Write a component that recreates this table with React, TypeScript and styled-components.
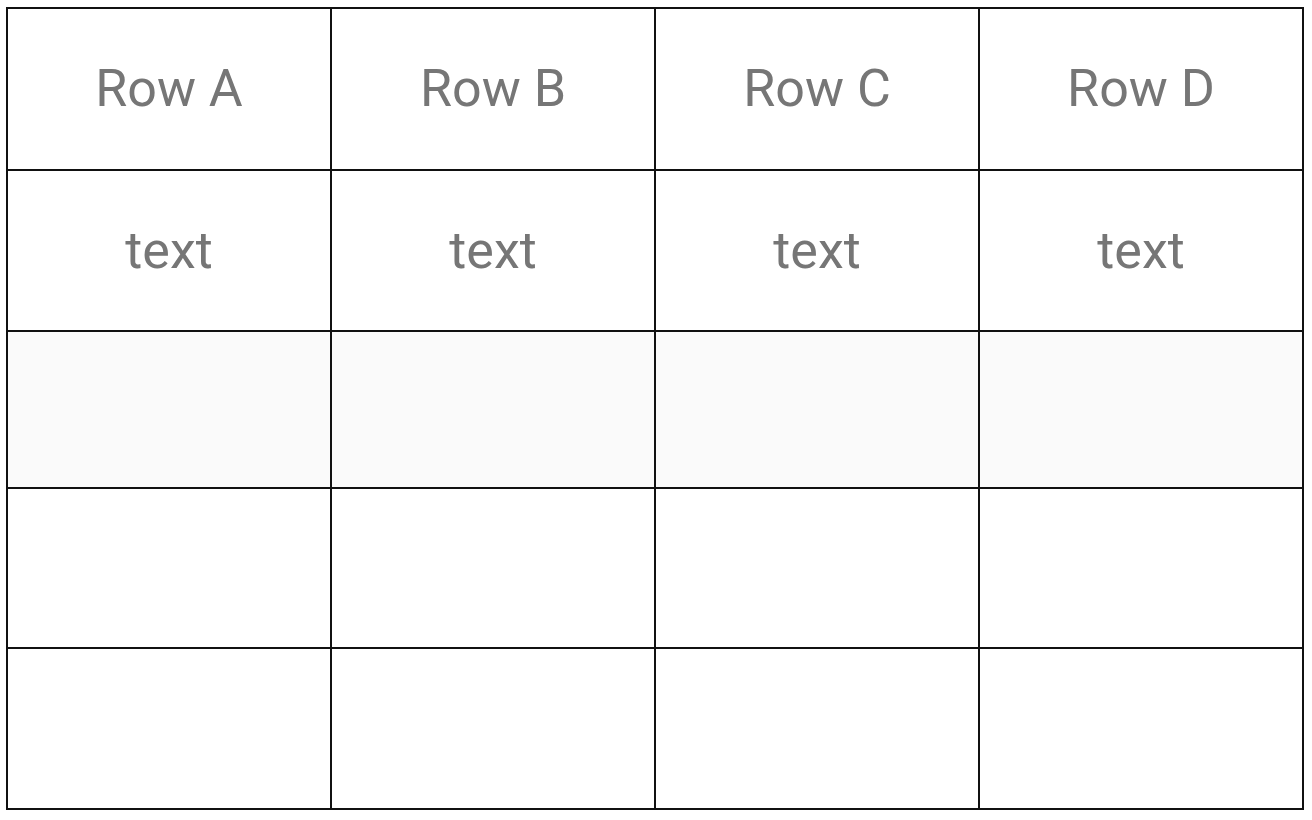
import React from "react";
import styled, { createGlobalStyle } from "styled-components";

const Global = createGlobalStyle`
  html, body { margin: 0; padding: 0; background: #ffffff; }
  body { font-family: Roboto, "Liberation Sans", sans-serif; }
`;

const Page = styled.div`
  padding: 7px 0 0 6px;
`;

const Table = styled.div`
  width: 1298px;
  display: grid;
  grid-template-columns: repeat(4, 1fr);
  grid-template-rows: 160px 159px 155px 158px 159px;
  gap: 2px;
  background: #111111;
  border: 2px solid #111111;
  box-sizing: border-box;
`;

const Cell = styled.div<{ $shade?: boolean }>`
  background: ${(p) => (p.$shade ? "#fafafa" : "#ffffff")};
  display: flex;
  align-items: center;
  justify-content: center;
  color: #767676;
  font-size: 52px;
  font-weight: 400;
  line-height: 1;
`;

const heads = ["Row A", "Row B", "Row C", "Row D"];

export default function App() {
  return (
    <Page>
      <Global />
      <Table>
        {heads.map((h) => (
          <Cell key={h}>{h}</Cell>
        ))}
        {heads.map((h) => (
          <Cell key={h + "t"}>text</Cell>
        ))}
        {heads.map((h) => (
          <Cell key={h + "s"} $shade />
        ))}
        {heads.map((h) => (
          <Cell key={h + "e1"} />
        ))}
        {heads.map((h) => (
          <Cell key={h + "e2"} />
        ))}
      </Table>
    </Page>
  );
}
